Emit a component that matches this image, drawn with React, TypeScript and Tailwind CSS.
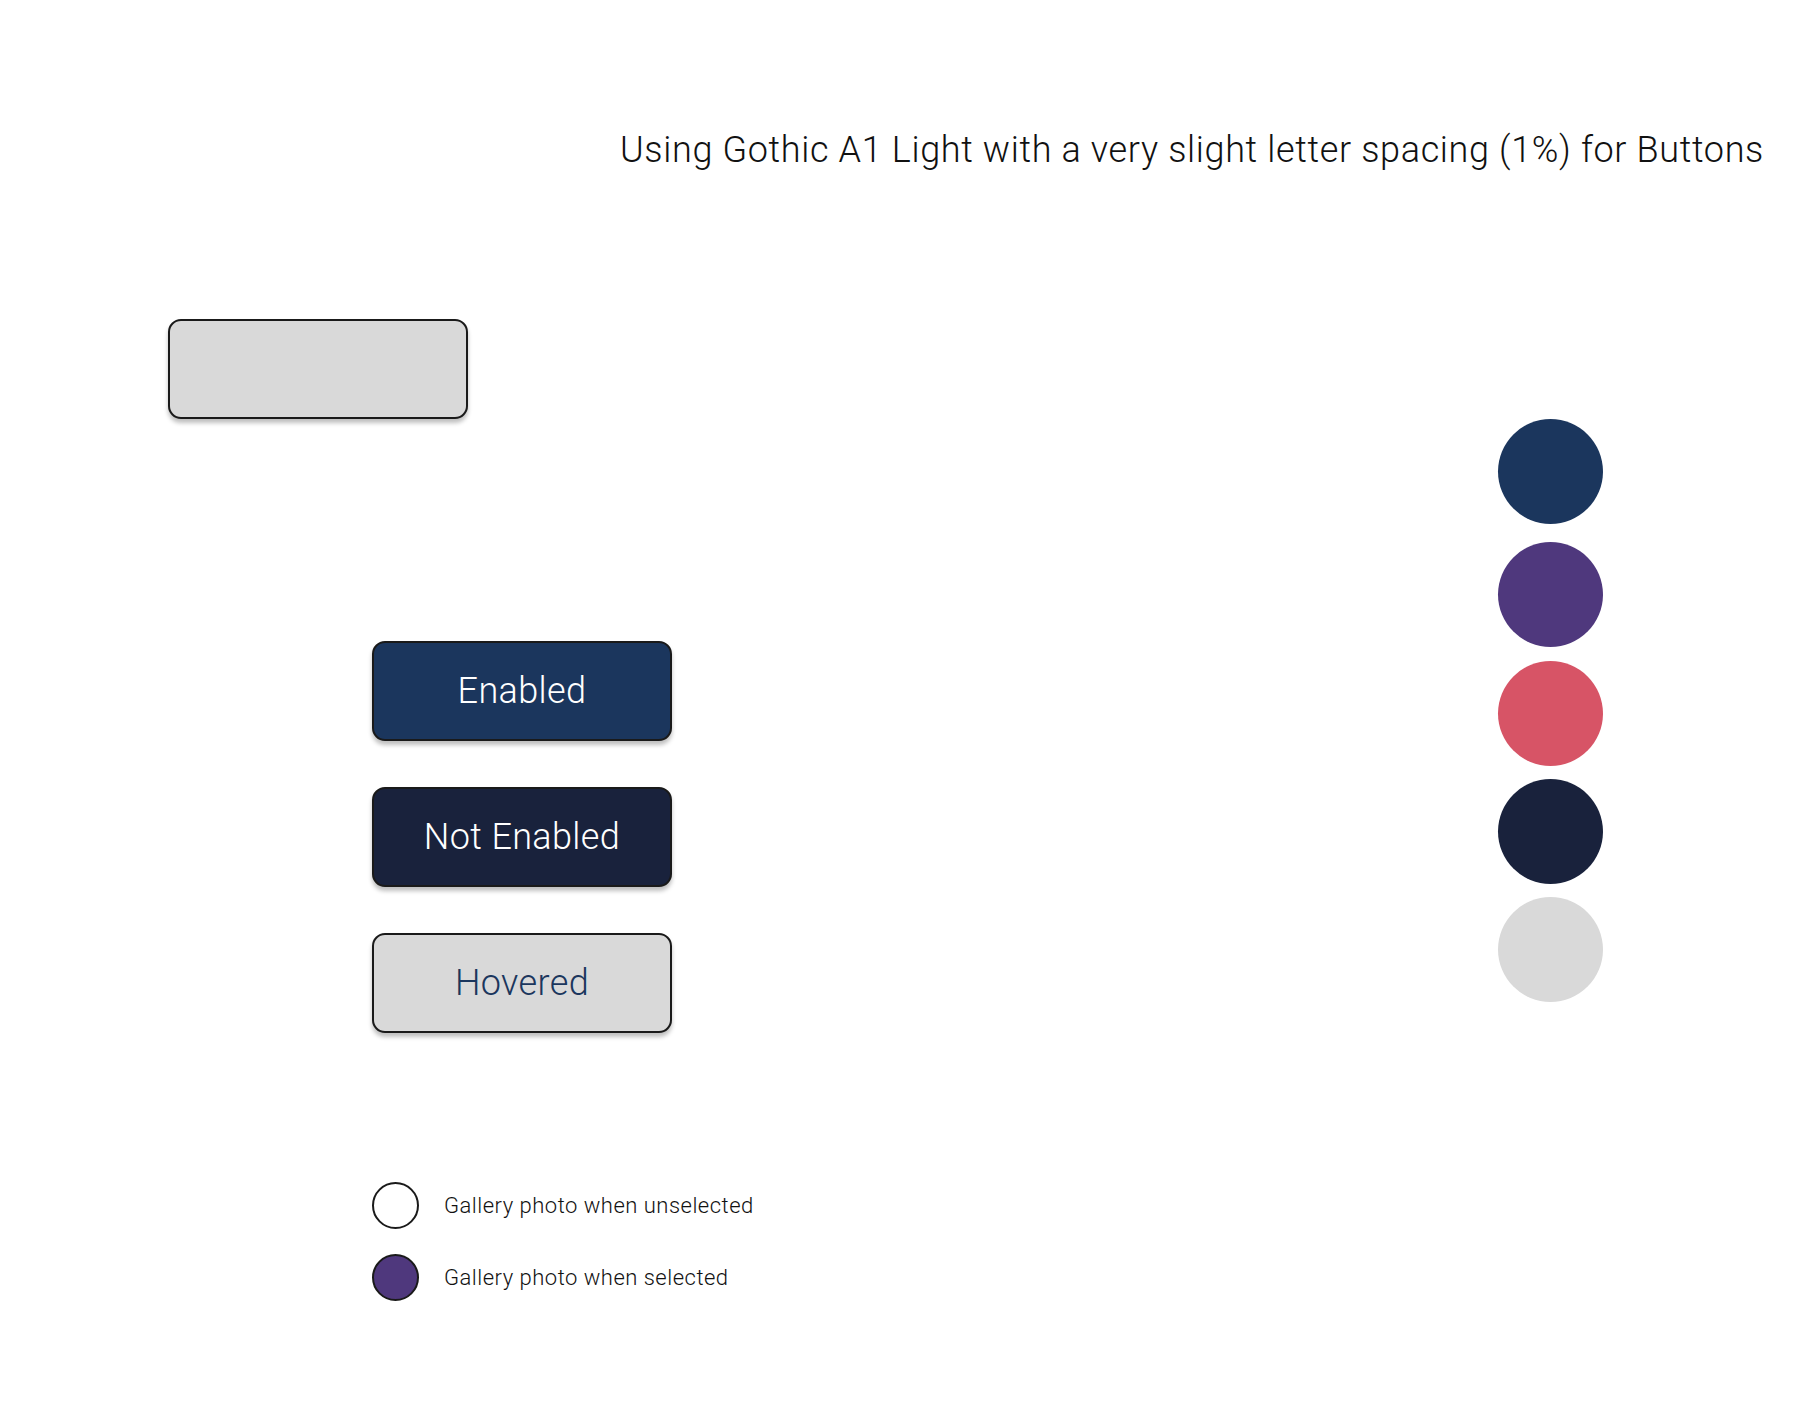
import React from "react";

const font = { fontFamily: "Roboto, 'Noto Sans', sans-serif" };

const buttons = [
  { label: "Enabled", cls: "bg-[#1b365d] text-white" },
  { label: "Not Enabled", cls: "bg-[#19223c] text-white" },
  { label: "Hovered", cls: "bg-[#d9d9d9] text-[#1b365d]" },
];

const swatches = [
  { c: "bg-[#1b365d]", mt: "mt-0" },
  { c: "bg-[#4f387d]", mt: "mt-[18px]" },
  { c: "bg-[#d75466]", mt: "mt-[14px]" },
  { c: "bg-[#19223c]", mt: "mt-[13px]" },
  { c: "bg-[#d9d9d9]", mt: "mt-[13px]" },
];

export default function App() {
  return (
    <div className="w-[1804px] h-[1404px] bg-white text-[#111]" style={font}>
      <div className="pt-[133px] pl-[620px]">
        <p className="text-[36px] leading-[35px] font-light tracking-[0.65px] whitespace-nowrap">
          Using Gothic A1 Light with a very slight letter spacing (1%) for Buttons
        </p>
      </div>

      <div className="flex">
        {/* left column: blank button, states, legend */}
        <div className="w-[1498px] pl-[168px] flex flex-col">
          <div className="mt-[151px] w-[300px] h-[100px] rounded-[13px] border-2 border-[#1a1a1a] bg-[#d9d9d9] shadow-[0_4px_4px_rgba(0,0,0,0.25)]" />

          <div className="ml-[204px] mt-[222px] flex flex-col gap-[46px]">
            {buttons.map((b) => (
              <button
                key={b.label}
                className={`w-[300px] h-[100px] rounded-[13px] border-2 border-[#1a1a1a] shadow-[0_4px_4px_rgba(0,0,0,0.25)] flex items-center justify-center text-[36px] font-light tracking-[0.01em] ${b.cls}`}
              >
                {b.label}
              </button>
            ))}
          </div>

          <div className="ml-[204px] mt-[149px] flex flex-col gap-[25px]">
            <div className="flex items-center gap-[25px]">
              <span className="w-[47px] h-[47px] rounded-full border-2 border-[#1a1a1a] bg-white" />
              <span className="text-[22px] font-light tracking-[0.5px]">Gallery photo when unselected</span>
            </div>
            <div className="flex items-center gap-[25px]">
              <span className="w-[47px] h-[47px] rounded-full border-2 border-[#1a1a1a] bg-[#4f387d]" />
              <span className="text-[22px] font-light tracking-[0.5px]">Gallery photo when selected</span>
            </div>
          </div>
        </div>

        {/* right column: palette */}
        <div className="mt-[251px] flex flex-col">
          {swatches.map((s) => (
            <span key={s.c} className={`w-[105px] h-[105px] rounded-full ${s.c} ${s.mt}`} />
          ))}
        </div>
      </div>
    </div>
  );
}
